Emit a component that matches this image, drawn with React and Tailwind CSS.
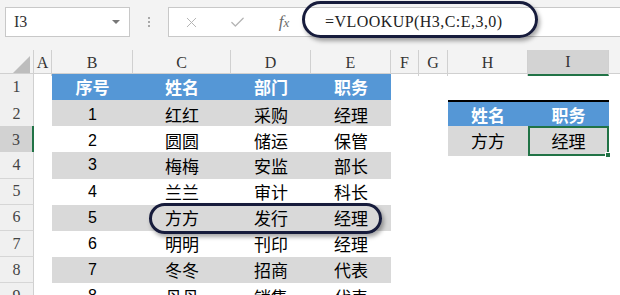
import React from 'react';
import { X, Check } from 'lucide-react';

const cjk = { fontFamily: '"Noto Sans CJK SC", "Noto Sans", sans-serif' };
const serif = { fontFamily: '"Liberation Serif", "Noto Sans CJK SC", serif' };

const cols = ['A', 'B', 'C', 'D', 'E', 'F', 'G', 'H', 'I'];

const rows = [
  ['1', '红红', '采购', '经理'],
  ['2', '圆圆', '储运', '保管'],
  ['3', '梅梅', '安监', '部长'],
  ['4', '兰兰', '审计', '科长'],
  ['5', '方方', '发行', '经理'],
  ['6', '明明', '刊印', '经理'],
  ['7', '冬冬', '招商', '代表'],
  ['8', '丹丹', '销售', '代表'],
];

const grid = 'grid grid-cols-[34px_18px_81px_98px_80px_80px_28px_29px_80px_81px_1fr]';

// row header cell on the left
const RowHead = ({ n, active }) => (
  <div
    className={
      'flex items-center justify-center text-[16px] text-[#444] border-b border-[#d6d6d6] ' +
      (active ? 'bg-[#d2d2d2] border-r-2 border-r-[#217346]' : 'bg-[#f0f0f0] border-r border-r-[#d0d0d0]')
    }
    style={serif}
  >
    {n}
  </div>
);

const Cell = ({ children, className = '' }) => (
  <div className={'flex items-center justify-center ' + className}>{children}</div>
);

export default function App() {
  return (
    <div className="relative w-[620px] h-[295px] overflow-hidden bg-white">
      {/* toolbar with name box and formula bar */}
      <div className="flex items-start h-[50px] pt-[7px] bg-[#f3f3f3]">
        <div className="ml-[5px] w-[125px] h-[30px] bg-white border border-[#c8c8c8] flex items-center justify-between pl-[8px] pr-[9px]">
          <span className="text-[16px] text-[#333]" style={serif}>I3</span>
          <span className="w-0 h-0 border-l-[4px] border-r-[4px] border-t-[4px] border-l-transparent border-r-transparent border-t-[#777]" />
        </div>
        <div className="w-[38px] h-[30px] flex flex-col items-center justify-center gap-[2px]">
          <span className="w-[2px] h-[2px] bg-[#a8a8a8]" />
          <span className="w-[2px] h-[2px] bg-[#a8a8a8]" />
          <span className="w-[2px] h-[2px] bg-[#a8a8a8]" />
        </div>
        <div className="flex-1 h-[30px] bg-white border border-r-0 border-[#c8c8c8] flex items-center">
          <div className="w-[45px] flex justify-center">
            <X size={17} strokeWidth={1.4} color="#b4b4b4" />
          </div>
          <div className="w-[47px] flex justify-center">
            <Check size={17} strokeWidth={1.8} color="#b4b4b4" />
          </div>
          <div className="w-[46px] flex justify-center items-baseline text-[#6b6b6b] italic" style={serif}>
            <span className="text-[17px]">f</span>
            <span className="text-[13px]">x</span>
          </div>
          <div className="ml-[18px] text-[16px] text-[#222] tracking-[0.45px] whitespace-nowrap" style={serif}>
            =VLOOKUP(H3,C:E,3,0)
          </div>
        </div>
      </div>

      {/* column headers */}
      <div className={grid + ' h-[24px] bg-[#f3f3f3] border-b border-[#d0d0d0]'}>
        <div className="relative border-r border-[#d0d0d0]">
          <svg className="absolute right-[3px] bottom-[3px]" width="17" height="17" viewBox="0 0 17 17">
            <polygon points="17,0 17,17 0,17" fill="#bdbdbd" />
          </svg>
        </div>
        {cols.map((c) => (
          <div
            key={c}
            className={
              'flex items-center justify-center text-[16px] text-[#333] border-r border-[#d0d0d0] ' +
              (c === 'I' ? 'bg-[#d3d3d3] border-b-2 border-b-[#217346]' : '')
            }
            style={serif}
          >
            {c}
          </div>
        ))}
        <div />
      </div>

      {/* row 1: table header */}
      <div className={grid + ' h-[26px]'}>
        <RowHead n="1" />
        <div />
        {['序号', '姓名', '部门', '职务'].map((t) => (
          <Cell key={t} className="bg-[#5597d6] border-b-2 border-black text-white font-bold text-[17px]">
            <span style={cjk}>{t}</span>
          </Cell>
        ))}
      </div>

      {rows.map((r, i) => {
        const n = i + 2;
        const fill = n % 2 === 0 ? 'bg-[#d9d9d9]' : 'bg-white';
        return (
          <div key={n} className={grid + ' h-[26.2px]'}>
            <RowHead n={n} active={n === 3} />
            <div />
            <Cell className={fill + ' text-[16px] text-black'}>
              <span style={{ fontFamily: '"Liberation Sans", Arial, sans-serif' }}>{r[0]}</span>
            </Cell>
            {r.slice(1).map((t, j) => (
              <Cell key={j} className={fill + ' text-[17px] text-black'}>
                <span style={cjk}>{t}</span>
              </Cell>
            ))}
            <div />
            <div />
            {n === 2 && (
              <>
                <Cell className="bg-[#5597d6] border-y-2 border-black text-white font-bold text-[17px]">
                  <span style={cjk}>姓名</span>
                </Cell>
                <Cell className="bg-[#5597d6] border-y-2 border-black text-white font-bold text-[17px]">
                  <span style={cjk}>职务</span>
                </Cell>
              </>
            )}
            {n === 3 && (
              <>
                <Cell className="bg-[#d9d9d9] text-[17px] text-black">
                  <span style={cjk}>方方</span>
                </Cell>
                <Cell className="relative bg-[#d9d9d9] border-2 border-[#217346] text-[17px] text-black">
                  <span style={cjk}>经理</span>
                  <span className="absolute right-[-4px] bottom-[-4px] w-[6px] h-[6px] bg-[#217346] border border-white" />
                </Cell>
              </>
            )}
          </div>
        );
      })}

      {/* hand-drawn highlight rings */}
      <div className="absolute left-[302px] top-[1px] w-[236px] h-[37px] rounded-full border-[3px] border-[#171c3c] shadow-[2px_3px_4px_rgba(0,0,0,0.35)]" />
      <div className="absolute left-[149px] top-[203px] w-[233px] h-[31px] rounded-full border-[3px] border-[#171c3c] shadow-[2px_3px_4px_rgba(0,0,0,0.35)]" />
    </div>
  );
}
